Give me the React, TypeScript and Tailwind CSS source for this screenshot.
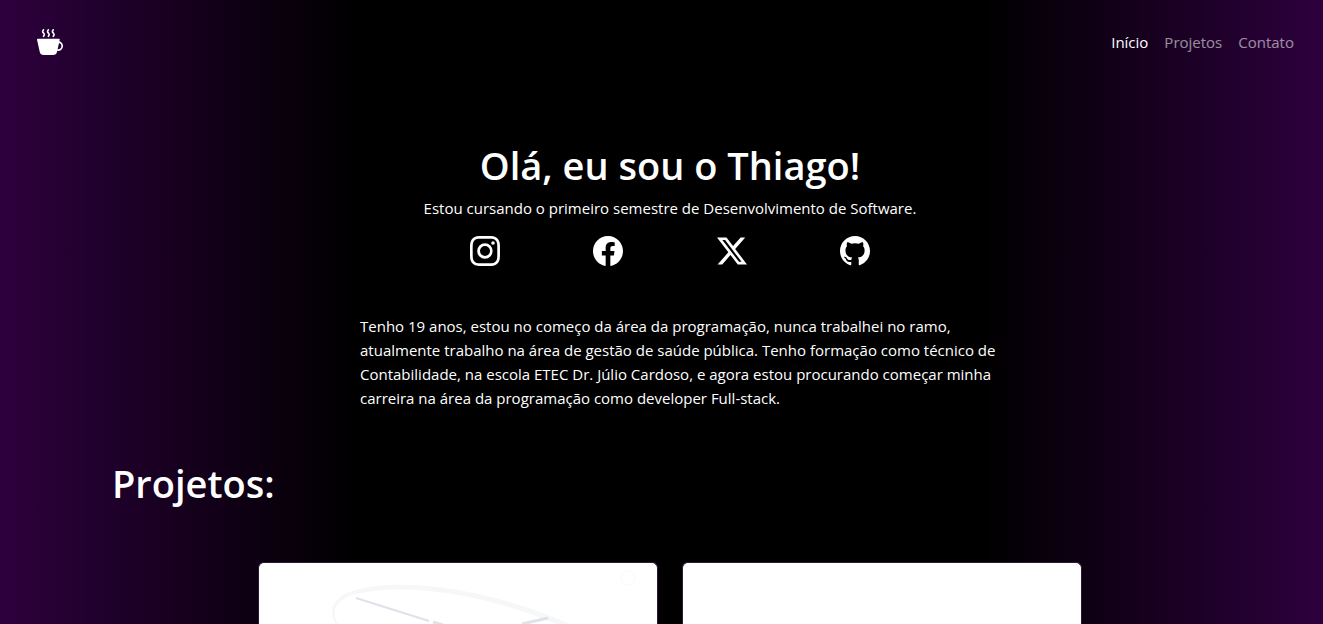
import { BsCupHotFill, BsFacebook, BsGithub, BsInstagram, BsTwitterX } from "react-icons/bs";

const navLinks = [
  { label: "Início", href: "#inicio", active: true },
  { label: "Projetos", href: "#projetos", active: false },
  { label: "Contato", href: "#contato", active: false },
];

const socialLinks = [
  { label: "Instagram", href: "#instagram", Icon: BsInstagram },
  { label: "Facebook", href: "#facebook", Icon: BsFacebook },
  { label: "X", href: "#x", Icon: BsTwitterX },
  { label: "GitHub", href: "#github", Icon: BsGithub },
];

function Navbar() {
  return (
    <header className="flex h-14 items-end justify-between pr-[29px] pl-[37px]">
      <a href="#inicio" aria-label="Página inicial">
        <BsCupHotFill className="mb-px size-[26px]" />
      </a>
      <nav className="flex gap-4 pb-0.5">
        {navLinks.map(({ label, href, active }) => (
          <a key={label} href={href} className={active ? "text-white" : "text-white/55"}>
            {label}
          </a>
        ))}
      </nav>
    </header>
  );
}

function ClockDrawing() {
  return (
    <svg viewBox="0 0 398 61" className="w-full" fill="none" aria-hidden="true">
      <path
        d="M84 68C68 56 69 38 90 29C135 13 230 22 326 68L314 68C226 28 140 19 93 32C71 40 71 56 86 68Z"
        fill="#f5f7f9"
      />
      <path d="M97 35L170 58" stroke="#dfe2e8" strokeWidth="2" />
      <path d="M174 59L184 62" stroke="#dfe2e8" strokeWidth="3" />
      <path d="M263 61L289 55" stroke="#dfe2e8" strokeWidth="3" />
      <circle cx="369" cy="15" r="7" stroke="#fafafa" strokeWidth="1" />
    </svg>
  );
}

export default function App() {
  return (
    <div className="flex h-screen flex-col overflow-hidden bg-[linear-gradient(to_right,#2d003d,#000_27%,#000_74%,#2d003d)] font-['Open_Sans',sans-serif] text-[15px] leading-6 text-white">
      <Navbar />
      <main className="flex flex-1 flex-col pt-[86px] pr-[95px] pl-28">
        <section className="mx-auto flex flex-col text-center">
          <h1 className="text-[38px] leading-[46px] font-semibold">Olá, eu sou o Thiago!</h1>
          <p className="mt-2">Estou cursando o primeiro semestre de Desenvolvimento de Software.</p>
          <div className="mt-4 grid grid-cols-4 justify-items-center">
            {socialLinks.map(({ label, href, Icon }) => (
              <a key={label} href={href} aria-label={label}>
                <Icon className="size-[30px]" />
              </a>
            ))}
          </div>
        </section>
        <p className="mt-12 ml-[248px] max-w-[660px]">
          Tenho 19 anos, estou no começo da área da programação, nunca trabalhei no ramo, atualmente
          trabalho na área de gestão de saúde pública. Tenho formação como técnico de Contabilidade,
          na escola ETEC Dr. Júlio Cardoso, e agora estou procurando começar minha carreira na área
          da programação como developer Full-stack.
        </p>
        <h2 className="mt-[50px] text-[38px] leading-[46px] font-semibold">Projetos:</h2>
        <div className="mt-14 flex flex-1 justify-center gap-6">
          <article className="w-[400px] overflow-hidden rounded-t-md border border-b-0 border-[#2d1838] bg-white">
            <ClockDrawing />
          </article>
          <article className="w-[400px] rounded-t-md border border-b-0 border-[#2d1838] bg-white" />
        </div>
      </main>
    </div>
  );
}
